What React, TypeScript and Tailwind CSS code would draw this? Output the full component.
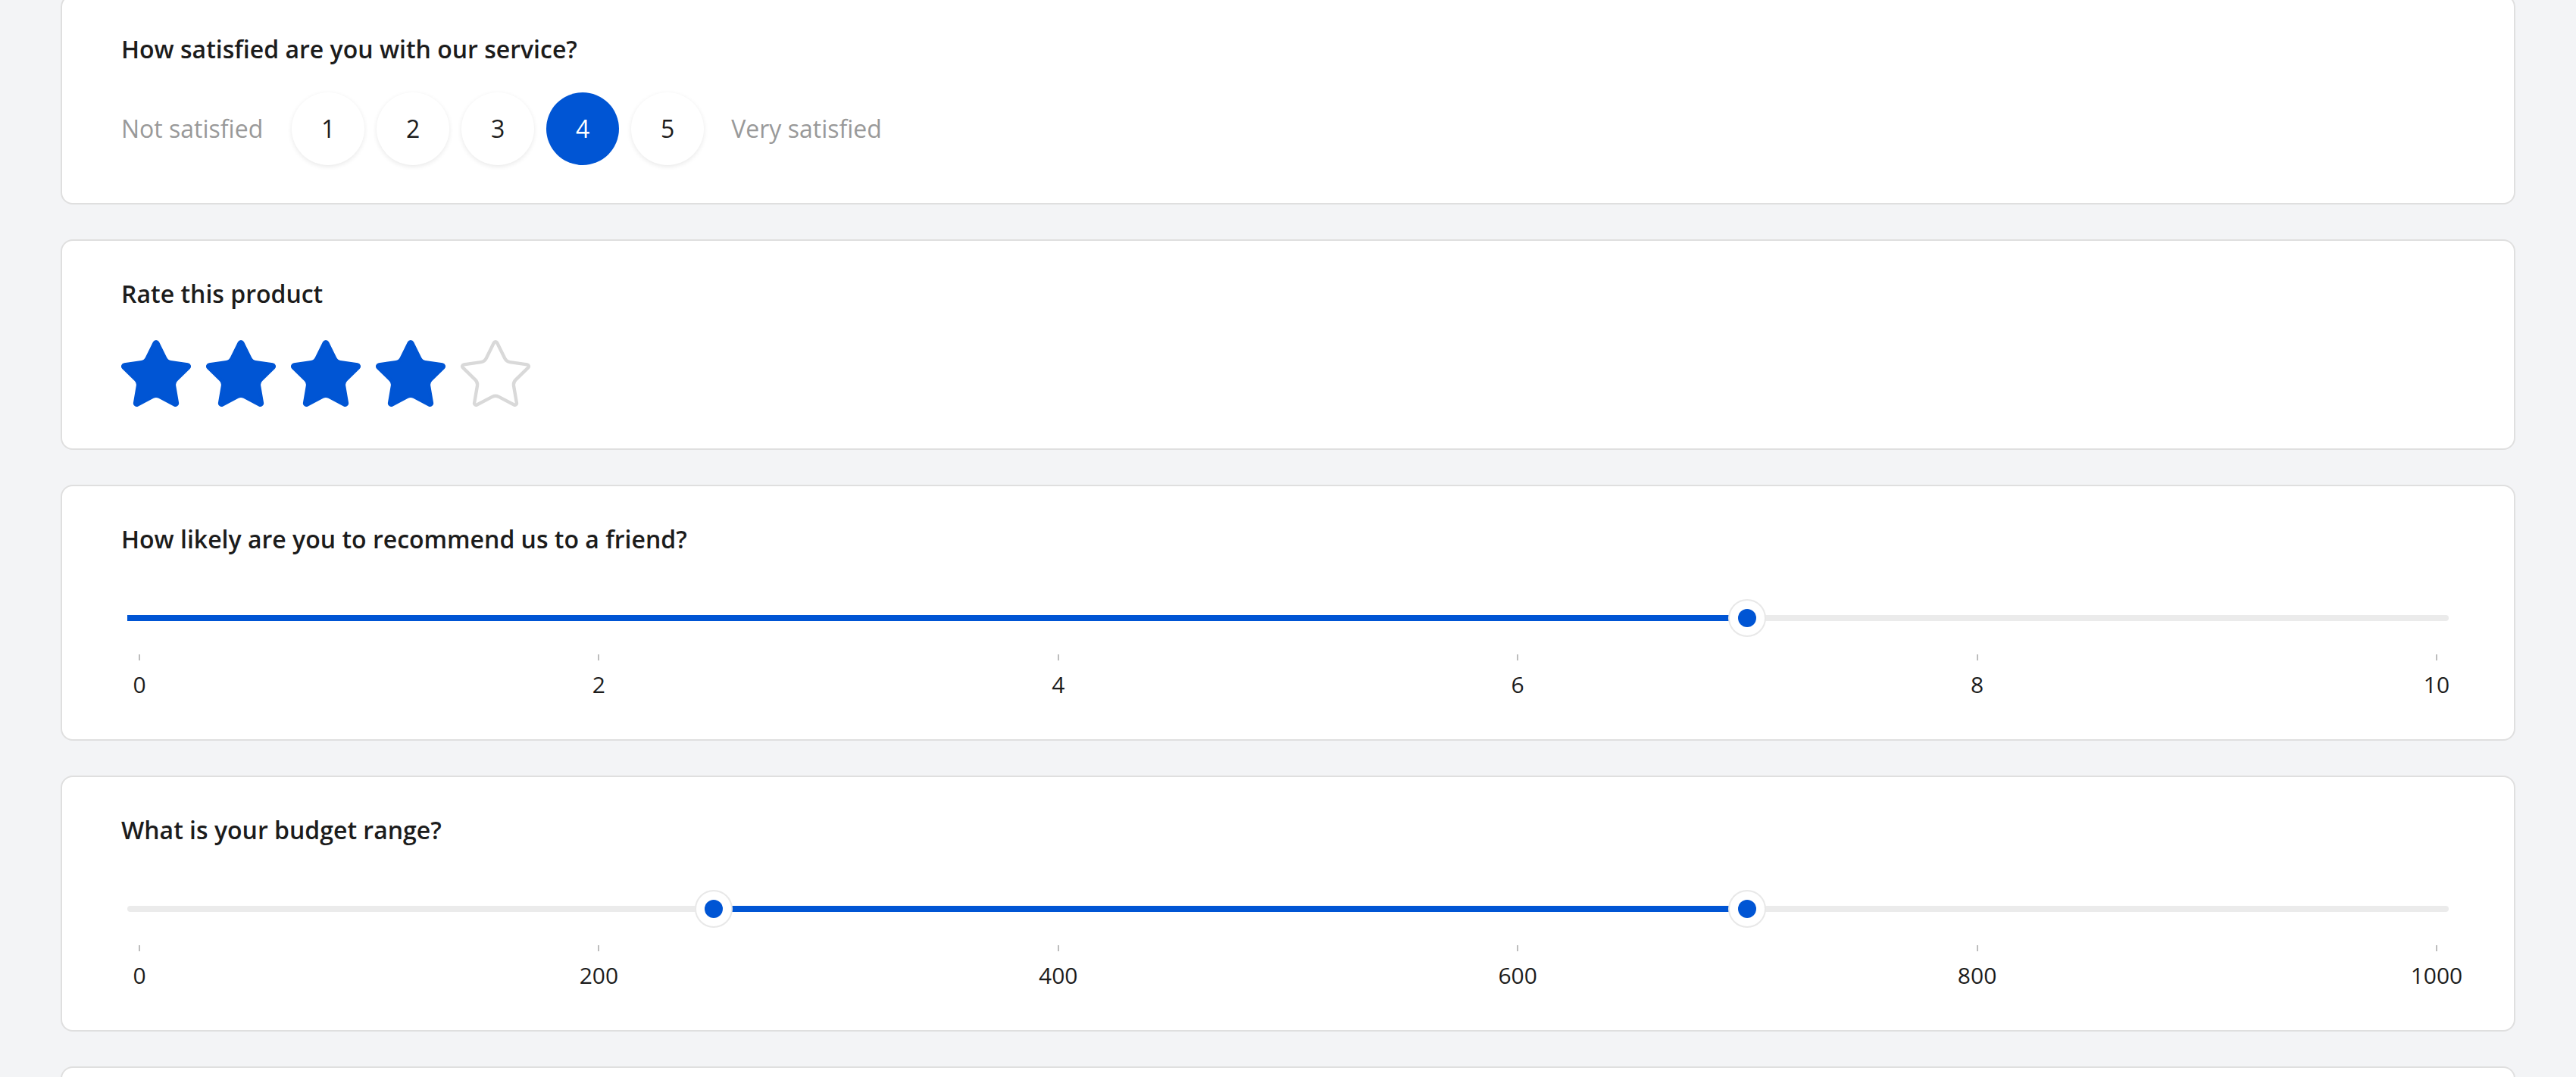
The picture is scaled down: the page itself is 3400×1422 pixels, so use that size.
import React, { useState } from 'react';

const BLUE = '#0055d4';

interface CardProps {
  title: string;
  children: React.ReactNode;
  className?: string;
}

const Card: React.FC<CardProps> = ({ title, children, className }) => (
  <div className={`rounded-2xl border-2 border-[#dfdfdf] bg-white px-[78px] py-[46px] ${className ?? ''}`}>
    <h2 className="text-[32px] leading-[48px] font-semibold text-[#1c1c1c]">{title}</h2>
    {children}
  </div>
);

const StarIcon: React.FC<{ filled: boolean }> = ({ filled }) => (
  <svg width="92" height="89" viewBox="1.5 1.5 21 20.3" fill={filled ? BLUE : 'none'} stroke={filled ? BLUE : '#d9d9d9'} strokeWidth={1} strokeLinejoin="round">
    <path d="M11.525 2.295a.53.53 0 0 1 .95 0l2.31 4.679a2.123 2.123 0 0 0 1.595 1.16l5.166.756a.53.53 0 0 1 .294.904l-3.736 3.638a2.123 2.123 0 0 0-.611 1.878l.882 5.14a.53.53 0 0 1-.771.56l-4.618-2.428a2.122 2.122 0 0 0-1.973 0L6.396 21.01a.53.53 0 0 1-.77-.56l.881-5.139a2.122 2.122 0 0 0-.611-1.879L2.16 9.795a.53.53 0 0 1 .294-.906l5.165-.755a2.122 2.122 0 0 0 1.597-1.16z" />
  </svg>
);

interface SliderProps {
  min: number;
  max: number;
  values: number[];
  marks: number[];
}

const Slider: React.FC<SliderProps> = ({ min, max, values, marks }) => {
  const pct = (v: number) => ((v - min) / (max - min)) * 100;
  const range = values.length > 1;
  const fillStyle = range
    ? { left: `${pct(values[0])}%`, width: `${pct(values[1]) - pct(values[0])}%` }
    : { left: '-16px', width: `calc(${pct(values[0])}% + 16px)` };

  return (
    <div className="mt-[55px] mb-[2px]">
      <div className="relative mx-2 flex h-[50px] items-center">
        <div className="h-2 w-full rounded-full bg-[#ebebeb]" />
        <div className="absolute inset-y-0 left-4 right-4">
          <div className="absolute top-1/2 h-2 -translate-y-1/2" style={{ ...fillStyle, backgroundColor: BLUE }} />
          {values.map((v) => (
            <div
              key={v}
              className="absolute top-0 flex h-[50px] w-[50px] -translate-x-1/2 items-center justify-center rounded-full border-2 border-[#e8e8e8] bg-white"
              style={{ left: `${pct(v)}%` }}
            >
              <div className="h-6 w-6 rounded-full bg-[#0055d4]" />
            </div>
          ))}
        </div>
      </div>
      <div className="mx-6 mt-[23px] flex justify-between">
        {marks.map((m) => (
          <div key={m} className="flex w-0 flex-col items-center">
            <div className="h-2 w-[2px] bg-[#bdbdbd]" />
            <span className="mt-2 whitespace-nowrap text-[30px] leading-[48px] text-[#1c1c1c]">{m}</span>
          </div>
        ))}
      </div>
    </div>
  );
};

export default function App() {
  const [satisfaction, setSatisfaction] = useState(4);
  const [rating, setRating] = useState(4);

  return (
    <div className="min-h-screen bg-[#f3f4f6] px-20 pb-20" style={{ fontFamily: '"Open Sans", "Noto Sans", sans-serif' }}>
      <div className="-mt-[7px] flex flex-col gap-[46px]">
        <Card title="How satisfied are you with our service?">
          <div className="mt-[33px] mb-1 flex items-center gap-4">
            <span className="mr-[22px] text-[32px] text-[#999999]">Not satisfied</span>
            {[1, 2, 3, 4, 5].map((n) => (
              <button
                key={n}
                onClick={() => setSatisfaction(n)}
                className={`flex h-24 w-24 items-center justify-center rounded-full text-[32px] ${
                  n === satisfaction
                    ? 'bg-[#0055d4] text-white'
                    : 'bg-white text-[#1c1c1c] shadow-[0_2px_6px_rgba(0,0,0,0.09)]'
                }`}
              >
                {n}
              </button>
            ))}
            <span className="ml-5 text-[32px] text-[#999999]">Very satisfied</span>
          </div>
        </Card>

        <Card title="Rate this product">
          <div className="mt-[37px] mb-2 flex gap-5">
            {[1, 2, 3, 4, 5].map((n) => (
              <button key={n} onClick={() => setRating(n)} className="block">
                <StarIcon filled={n <= rating} />
              </button>
            ))}
          </div>
        </Card>

        <Card title="How likely are you to recommend us to a friend?">
          <Slider min={0} max={10} values={[7]} marks={[0, 2, 4, 6, 8, 10]} />
        </Card>

        <Card title="What is your budget range?">
          <Slider min={0} max={1000} values={[250, 700]} marks={[0, 200, 400, 600, 800, 1000]} />
        </Card>

        <Card title="Any other feedback?">
          <div className="mt-8 h-40 rounded-xl border-2 border-[#dfdfdf]" />
        </Card>
      </div>
    </div>
  );
}
